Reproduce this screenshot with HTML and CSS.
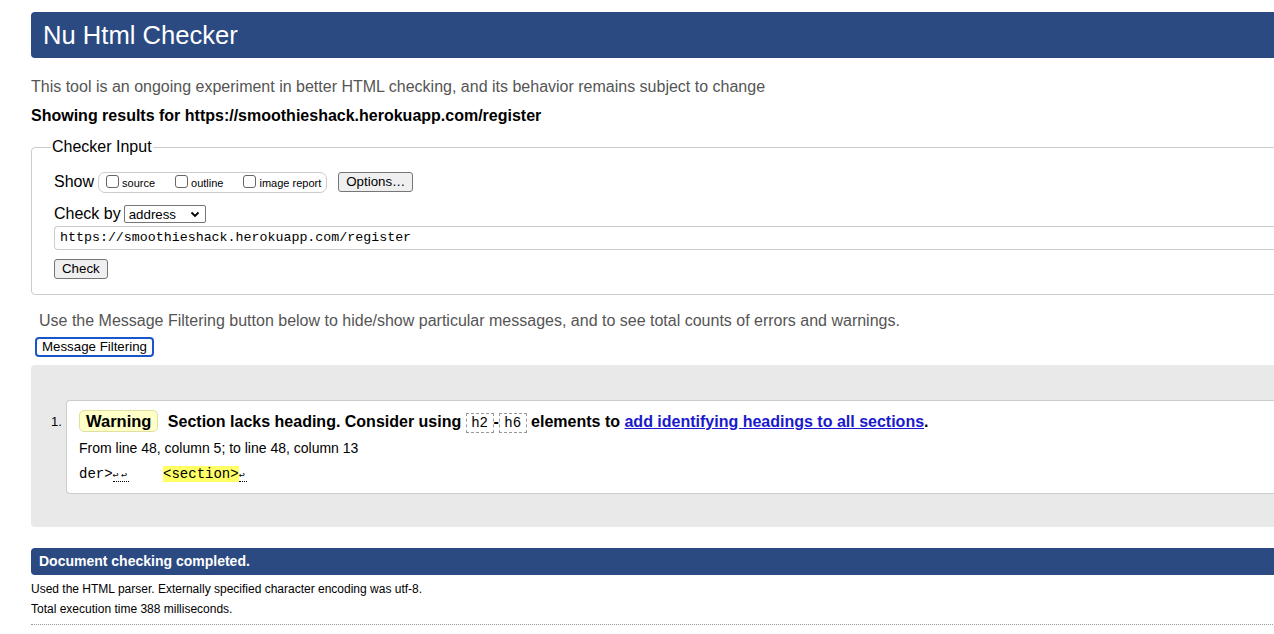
FILE: index.html
```html
<!DOCTYPE html>
<html lang="en">
<head>
<meta charset="utf-8">
<title>Nu Html Checker</title>
<link rel="stylesheet" href="styles.css">
</head>
<body>
<div class="page">
  <h1 class="banner">Nu Html Checker</h1>
  <p class="intro">This tool is an ongoing experiment in better HTML checking, and its behavior remains subject to change</p>
  <p class="showing">Showing results for https://smoothieshack.herokuapp.com/register</p>

  <fieldset class="input-set">
    <legend>Checker Input</legend>
    <div class="row show-row">
      <span class="lbl">Show</span>
      <span class="opts">
        <label><span class="cb"></span>source</label>
        <label><span class="cb"></span>outline</label>
        <label><span class="cb"></span>image report</label>
      </span>
      <button class="btn">Options…</button>
    </div>
    <div class="row by-row">
      <span class="lbl">Check by</span>
      <span class="select">address<svg width="10" height="7" viewBox="0 0 10 7"><path d="M1.5 1.5 L5 5 L8.5 1.5" fill="none" stroke="#000" stroke-width="1.8"/></svg></span>
    </div>
    <div class="url">https://smoothieshack.herokuapp.com/register</div>
    <button class="btn check">Check</button>
  </fieldset>

  <p class="filter-note">Use the Message Filtering button below to hide/show particular messages, and to see total counts of errors and warnings.</p>
  <button class="btn filter-btn">Message Filtering</button>

  <div class="results">
    <ol class="messages">
      <li class="msg">
        <p class="msg-head"><span class="badge">Warning</span> <span class="msg-text">Section lacks heading. Consider using <code class="tag">h2</code>-<code class="tag">h6</code> elements to <a href="#">add identifying headings to all sections</a>.</span></p>
        <p class="loc">From line 48, column 5; to line 48, column 13</p>
        <p class="extract"><code>der&gt;<span class="lf">↩↩</span>    <mark>&lt;section&gt;</mark><span class="lf">↩</span></code></p>
      </li>
    </ol>
  </div>

  <h2 class="done">Document checking completed.</h2>
  <p class="small">Used the HTML parser. Externally specified character encoding was utf-8.</p>
  <p class="small">Total execution time 388 milliseconds.</p>
  <hr class="dots">
</div>
</body>
</html>
```

FILE: styles.css
```css
html { overflow: hidden; }
body {
  margin: 0;
  font-family: "Liberation Sans", Arial, sans-serif;
  color: #000;
  background: #fff;
}
.page {
  width: 1290px;
  padding: 12px 0 0 31px;
}
.banner {
  margin: 0;
  height: 46px;
  line-height: 46px;
  background: #2b4a82;
  color: #fff;
  font-weight: normal;
  font-size: 25.6px;
  padding-left: 12px;
  border-radius: 4px 0 0 4px;
}
.intro {
  margin: 19px 0 0;
  font-size: 16px;
  line-height: 20px;
  color: #555;
}
.showing {
  margin: 9px 0 0;
  font-size: 16px;
  line-height: 20px;
  font-weight: bold;
}
.input-set {
  margin: 11px 0 0;
  border: 1px solid #ccc;
  border-radius: 4px;
  padding: 2px 0 15px 22px;
  min-width: 0;
}
.input-set legend {
  font-size: 16px;
  padding: 0 1px;
  margin-left: -3px;
  line-height: 20px;
}
.row {
  display: flex;
  align-items: center;
  font-size: 16px;
}
.show-row { height: 22px; margin-top: 12px; }
.lbl { margin-right: 4px; }
.opts {
  display: flex;
  align-items: center;
  height: 19px;
  border: 1px solid #ccc;
  border-radius: 7px;
  padding: 0 5px 0 7px;
  font-size: 11px;
}
.opts label {
  display: flex;
  align-items: center;
  margin-right: 20px;
  padding-top: 2px;
}
.opts label:last-child { margin-right: 0; }
.cb {
  display: inline-block;
  width: 11px;
  height: 11px;
  border: 1px solid #666;
  border-radius: 3px;
  margin-right: 3px;
  margin-top: -4px;
  background: #fff;
}
.btn {
  font-family: "Liberation Sans", Arial, sans-serif;
  font-size: 13.3px;
  color: #000;
  background: #efefef;
  border: 1px solid #767676;
  border-radius: 3px;
  padding: 1px 6px;
  height: 20px;
  line-height: 16px;
}
.show-row .btn { margin-left: 11px; padding: 1px 7px; }
.by-row { margin-top: 11px; height: 20px; }
.select {
  display: inline-flex;
  align-items: center;
  justify-content: space-between;
  width: 71px;
  height: 16px;
  border: 1px solid #767676;
  border-radius: 2px;
  padding: 0 5px 0 4px;
  font-size: 13.3px;
  margin-left: -1px;
}
.url {
  margin-top: 2px;
  height: 22px;
  line-height: 22px;
  border: 1px solid #ccc;
  border-right: none;
  border-radius: 4px 0 0 4px;
  padding-left: 5px;
  font-family: "Liberation Mono", "Courier New", monospace;
  font-size: 13.3px;
}
.check { margin-top: 9px; display: block; padding: 1px 7px; }
.filter-note {
  margin: 16px 0 0 8px;
  font-size: 16px;
  line-height: 20px;
  color: #555;
}
.filter-btn {
  margin: 6px 0 0 4px;
  display: block;
  border: 2px solid #1a56c8;
  border-radius: 4px;
  background: #fff;
  padding: 0 5px;
  height: 20px;
  line-height: 16px;
}
.results {
  margin-top: 8px;
  background: #e9e9e9;
  border-radius: 4px 0 0 4px;
  padding: 35px 0 33px 35px;
}
.messages {
  margin: 0;
  padding: 0;
  list-style: none;
  counter-reset: m;
}
.msg {
  position: relative;
  counter-increment: m;
  background: #fff;
  border: 1px solid #ccc;
  border-right: none;
  border-radius: 4px 0 0 4px;
  padding: 9px 0 7px 12px;
}
.msg::before {
  content: counter(m) ".";
  position: absolute;
  left: -16px;
  top: 13px;
  font-size: 13px;
}
.msg p { margin: 0; }
.msg-head {
  font-size: 16px;
  font-weight: bold;
  line-height: 22px;
}
.badge {
  display: inline-block;
  background: #ffffc8;
  border: 1px solid #e2e0a0;
  border-radius: 5px;
  padding: 0 6px 0 6px;
  font-size: 16.5px;
  line-height: 20px;
  margin-right: 5px;
}
.tag {
  font-family: "Liberation Mono", "Courier New", monospace;
  font-weight: normal;
  font-size: 14px;
  border: 1px dashed #999;
  padding: 1px 4.5px;
}
.msg a { color: #1a1acc; }
.loc {
  margin-top: 4px !important;
  font-size: 14px;
  line-height: 20px;
}
.extract {
  margin-top: 5px !important;
  line-height: 20px;
}
.extract code {
  font-family: "Liberation Mono", "Courier New", monospace;
  font-size: 14px;
  white-space: pre;
}
.lf {
  font-size: 10px;
  letter-spacing: 2.4px;
  border-bottom: 1px dotted #000;
}
mark { background: #ffff66; }
.done {
  margin: 21px 0 0;
  height: 27px;
  line-height: 27px;
  background: #2b4a82;
  color: #fff;
  font-size: 14px;
  padding-left: 8px;
  border-radius: 4px 0 0 4px;
}
.small {
  margin: 0;
  font-size: 12px;
  line-height: 20px;
}
.done + .small { margin-top: 4px; }
.dots {
  margin: 5px 0 0;
  border: none;
  border-top: 1px dotted #999;
}
```
